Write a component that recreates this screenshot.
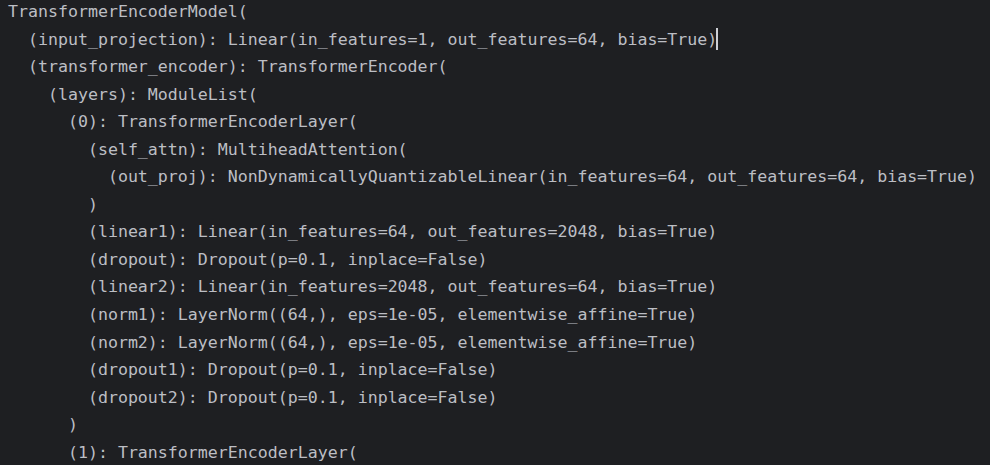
const lines = [
  "TransformerEncoderModel(",
  "  (input_projection): Linear(in_features=1, out_features=64, bias=True)",
  "  (transformer_encoder): TransformerEncoder(",
  "    (layers): ModuleList(",
  "      (0): TransformerEncoderLayer(",
  "        (self_attn): MultiheadAttention(",
  "          (out_proj): NonDynamicallyQuantizableLinear(in_features=64, out_features=64, bias=True)",
  "        )",
  "        (linear1): Linear(in_features=64, out_features=2048, bias=True)",
  "        (dropout): Dropout(p=0.1, inplace=False)",
  "        (linear2): Linear(in_features=2048, out_features=64, bias=True)",
  "        (norm1): LayerNorm((64,), eps=1e-05, elementwise_affine=True)",
  "        (norm2): LayerNorm((64,), eps=1e-05, elementwise_affine=True)",
  "        (dropout1): Dropout(p=0.1, inplace=False)",
  "        (dropout2): Dropout(p=0.1, inplace=False)",
  "      )",
  "      (1): TransformerEncoderLayer(",
];

export default function App() {
  return (
    <div className="w-[990px] h-[465px] overflow-hidden bg-[#1e1f22]">
      <div
        className="pl-[8px] -mt-[2px] text-[#bcbec4] text-[16.6px] leading-[27.56px] whitespace-pre"
        style={{ fontFamily: '"DejaVu Sans Mono", "Liberation Mono", monospace' }}
      >
        {lines.map((line, i) => (
          <div key={i} className="h-[27.56px]">
            {line}
            {i === 1 && (
              <span className="inline-block w-[2px] h-[22px] bg-[#ced0d6] align-middle -ml-[1px] -mt-[2px]" />
            )}
          </div>
        ))}
      </div>
    </div>
  );
}
